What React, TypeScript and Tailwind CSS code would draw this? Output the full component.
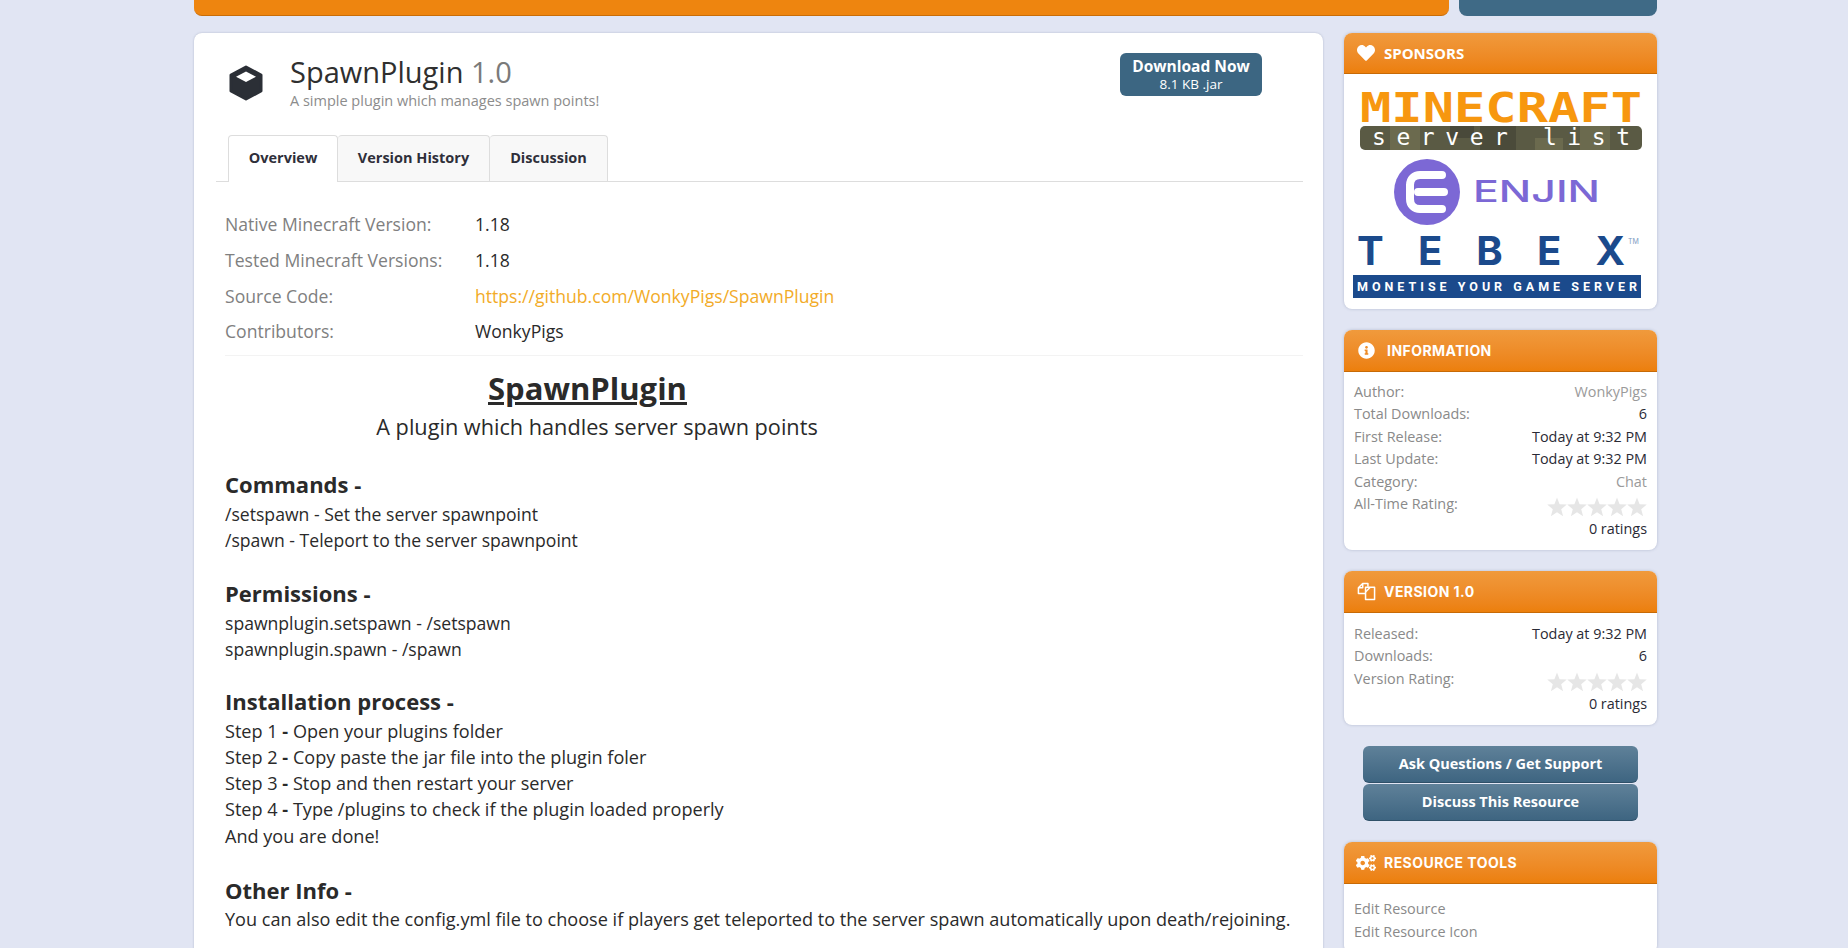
import React from 'react'
import { FaCogs, FaHeart, FaInfoCircle } from 'react-icons/fa'

type Row = { label: string; value: string; tone?: 'muted' | 'dark' }

const infoRows: Row[] = [
  { label: 'Author:', value: 'WonkyPigs', tone: 'muted' },
  { label: 'Total Downloads:', value: '6' },
  { label: 'First Release:', value: 'Today at 9:32 PM' },
  { label: 'Last Update:', value: 'Today at 9:32 PM' },
  { label: 'Category:', value: 'Chat', tone: 'muted' },
]

const versionRows: Row[] = [
  { label: 'Released:', value: 'Today at 9:32 PM' },
  { label: 'Downloads:', value: '6' },
]

const steps = [
  ['Step 1', 'Open your plugins folder'],
  ['Step 2', 'Copy paste the jar file into the plugin foler'],
  ['Step 3', 'Stop and then restart your server'],
  ['Step 4', 'Type /plugins to check if the plugin loaded properly'],
]

const FilesIcon = () => (
  <svg viewBox="0 0 20 20" className="w-[19px] h-[19px]" fill="none" stroke="white" strokeWidth="1.6" strokeLinejoin="round">
    <path d="M9 12H1.5V6L6 1.5h5.5V5" />
    <path d="M6 1.5V6H1.5" />
    <path d="M9 5.5h9.5v13H9z" />
    <path d="M14 5.5L9 10.5" />
  </svg>
)

const CubeIcon = () => (
  <svg viewBox="0 0 36 36" className="w-[36px] h-[36px]">
    <path d="M18 2 33 10v16L18 34 3 26V10z" fill="#2b2f36" strokeLinejoin="round" stroke="#2b2f36" strokeWidth="3" />
    <path d="M18 6.5 28 11.8 18 17 8 11.8z" fill="white" />
  </svg>
)

const Star = () => (
  <svg viewBox="0 0 20 20" className="w-[20px] h-[20px]">
    <path d="M10 0.5 12.6 7.2 19.8 7.6 14.2 12.2 16.1 19.2 10 15.3 3.9 19.2 5.8 12.2 0.2 7.6 7.4 7.2z" fill="#e6e6e6" />
  </svg>
)

const Card = ({ icon, title, gap = 'gap-[8px]', height = 'h-[42px]', titleClass, children }: { icon: React.ReactNode; title: string; gap?: string; height?: string; titleClass?: string; children: React.ReactNode }) => (
  <section className="rounded-lg bg-white shadow-[0_0_3px_rgba(120,130,160,0.45)] overflow-hidden">
    <div className={`${height} flex items-center pl-[12px] ${gap} bg-gradient-to-b from-[#f09a3c] to-[#ec7f0b] border-b border-[#c76a06] text-white`}>
      <span className="w-[20px] flex justify-center">{icon}</span>
      <h3 className={titleClass ?? "font-['Inter',sans-serif] text-[14px] font-bold tracking-[0.45px] uppercase"}>{title}</h3>
    </div>
    {children}
  </section>
)

const Rows = ({ rows }: { rows: Row[] }) => (
  <>
    {rows.map((r) => (
      <div key={r.label} className="flex justify-between h-[22.4px] leading-[22.4px]">
        <span className="text-[#8a8a8a]">{r.label}</span>
        <span className={r.tone === 'muted' ? 'text-[#9a9a9a]' : 'text-[#2a2a35]'}>{r.value}</span>
      </div>
    ))}
  </>
)

const Rating = ({ label }: { label: string }) => (
  <>
    <div className="flex justify-between h-[22px] leading-[22px]">
      <span className="text-[#8a8a8a]">{label}</span>
      <span className="flex pt-[4px]">
        {[0, 1, 2, 3, 4].map((i) => <Star key={i} />)}
      </span>
    </div>
    <div className="text-right text-[#2a2a35] mt-[3.5px] leading-[22px]">0 ratings</div>
  </>
)

const SideButton = ({ label }: { label: string }) => (
  <button className="h-[37px] pb-[1px] w-full rounded-md bg-gradient-to-b from-[#5f8199] to-[#3e6581] border-b border-[#2f5068] text-white text-[14.5px] font-bold">
    {label}
  </button>
)

const SponsorLogos = () => (
  <div className="flex flex-col items-center">
    <svg width="282" height="59" viewBox="0 0 282 59" className="mt-[18px] overflow-visible">
      <text x="0" y="30" textLength="282" lengthAdjust="spacingAndGlyphs" fill="#f7970f" fontSize="40" fontWeight="700" className="font-['DejaVu_Sans_Mono',monospace]">MINECRAFT</text>
      <rect x="0" y="34" width="282" height="24" rx="5" fill="#5a5a44" />
      <rect x="30" y="34" width="30" height="24" fill="#6b6a4e" />
      <rect x="90" y="34" width="24" height="12" fill="#49493a" />
      <rect x="120" y="34" width="36" height="24" fill="#4b4b3a" />
      <rect x="175" y="46" width="28" height="12" fill="#6b6a4e" />
      <rect x="220" y="34" width="30" height="24" fill="#6b6a4e" />
      <text x="12" y="53" textLength="258" lengthAdjust="spacing" fill="white" fontSize="23" className="font-['DejaVu_Sans_Mono',monospace]">server list</text>
    </svg>
    <svg width="282" height="68" viewBox="0 0 282 68" className="mt-[7px] mr-[4px]">
      <circle cx="69" cy="34" r="33" fill="#7c68d5" />
      <path d="M84 17H62c-6 0-10 4-10 10v14c0 6 4 10 10 10h22M60 34h26" fill="none" stroke="white" strokeWidth="8" strokeLinecap="round" />
      <text x="115" y="44" textLength="127" lengthAdjust="spacingAndGlyphs" fill="#7c68d5" fontSize="30" fontWeight="500" className="font-['Inter',sans-serif]">ENJIN</text>
    </svg>
    <svg width="288" height="68" viewBox="0 0 288 68" className="mt-[12px] mr-[7px] overflow-visible">
      <text x="4" y="27" textLength="268" lengthAdjust="spacing" fill="#1b4a8c" fontSize="40" fontWeight="700" className="font-['Inter',sans-serif]">TEBEX</text>
      <text x="275" y="6" fill="#7f9cc2" fontSize="7" className="font-['Inter',sans-serif]">TM</text>
      <rect x="0" y="37" width="288" height="23" fill="#1b4a8c" />
      <text x="4" y="53" textLength="280" lengthAdjust="spacing" fill="white" fontSize="12.5" fontWeight="700" className="font-['Roboto',sans-serif]">MONETISE YOUR GAME SERVER</text>
    </svg>
  </div>
)

export default function App() {
  return (
    <div className="h-[948px] overflow-hidden bg-[#e1e5f3] font-['Open_Sans',sans-serif] text-[#2a2a2a]">
      <div className="w-[1463px] ml-[194px]">
        <div className="flex gap-[10px] h-[16px]">
          <div className="w-[1255px] rounded-b-lg bg-[#ee850f] border-b border-[#c96d07]" />
          <div className="w-[198px] rounded-b-lg bg-[#3f6a86]" />
        </div>

        <div className="flex gap-[21px] mt-[17px]">
          <main className="w-[1129px] h-[1000px] rounded-lg bg-white shadow-[0_0_2px_rgba(120,130,160,0.5)] pl-[22px] pr-[20px]">
            <header className="flex h-[102px] pt-[19.5px]">
              <div className="ml-[12px] mt-[12.5px] w-[54px]"><CubeIcon /></div>
              <div className="ml-[8px] w-[811px]">
                <h1 className="text-[29px] leading-[38px] text-[#2f2f2f]">SpawnPlugin <span className="text-[#7a7a7a]">1.0</span></h1>
                <p className="mt-[1px] text-[14.5px] leading-[18px] text-[#8c8c8c]">A simple plugin which manages spawn points!</p>
              </div>
              <button className="mt-[0.5px] ml-[19px] w-[142px] h-[43px] rounded-md bg-[#3c6682] text-white flex flex-col items-center justify-center">
                <span className="text-[15.5px] leading-[19px] font-bold">Download Now</span>
                <span className="text-[13.5px] leading-[16px]">8.1 KB .jar</span>
              </button>
            </header>

            <nav className="flex h-[47px] pl-[12px] border-b border-[#dddddd] text-[14.5px] font-bold text-[#2f2f3a]">
              <div className="w-[110px] h-[47px] pb-[3px] flex items-center justify-center bg-white border border-b-0 border-[#dddddd] rounded-t">Overview</div>
              <div className="w-[152px] h-[46px] pb-[2px] flex items-center justify-center bg-[#f8f8f8] border border-l-0 border-b-0 border-[#dddddd] rounded-t">Version History</div>
              <div className="w-[118px] h-[46px] pb-[2px] flex items-center justify-center bg-[#f8f8f8] border border-l-0 border-b-0 border-[#dddddd] rounded-t">Discussion</div>
            </nav>

            <div className="ml-[9px]">
              <div className="mt-[25.3px] pb-[4.7px] border-b border-[#f3f3f3] text-[17.6px]">
                {[
                  ['Native Minecraft Version:', '1.18'],
                  ['Tested Minecraft Versions:', '1.18'],
                  ['Source Code:', 'https://github.com/WonkyPigs/SpawnPlugin'],
                  ['Contributors:', 'WonkyPigs'],
                ].map(([label, value], i) => (
                  <div key={label} className="flex h-[35.7px] leading-[35.7px]">
                    <span className="w-[250px] text-[#808080]">{label}</span>
                    <span className={i === 2 ? 'text-[#f2ab27]' : 'text-[#2a2a2a]'}>{value}</span>
                  </div>
                ))}
              </div>

              <div className="mt-[11.5px] text-[17.6px] leading-[25.5px]">
                <h2 className="w-[725px] text-center text-[31px] leading-[42px] font-bold underline">SpawnPlugin</h2>
                <p className="w-[744px] text-center text-[21.7px] leading-[32px] mt-[2px]">A plugin which handles server spawn points</p>

                <h3 className="mt-[25px] text-[22px] leading-[32px] font-bold">Commands -</h3>
                <div className="mt-[2px]">
                  <p>/setspawn - Set the server spawnpoint</p>
                  <p>/spawn - Teleport to the server spawnpoint</p>
                </div>

                <h3 className="mt-[26px] text-[22px] leading-[28px] font-bold">Permissions -</h3>
                <div className="mt-[4px]">
                  <p>spawnplugin.setspawn - /setspawn</p>
                  <p>spawnplugin.spawn - /spawn</p>
                </div>

                <h3 className="mt-[25px] text-[22px] leading-[28px] font-bold">Installation process -</h3>
                <div className="mt-[2.5px] text-[18.1px] leading-[26.2px]">
                  {steps.map(([step, text]) => (
                    <p key={step}>{step} <b>-</b> {text}</p>
                  ))}
                  <p>And you are done!</p>
                </div>

                <h3 className="mt-[27px] text-[22px] leading-[28px] font-bold">Other Info -</h3>
                <p className="mt-[2px] text-[18.1px] leading-[26px] whitespace-nowrap">You can also edit the config.yml file to choose if players get teleported to the server spawn automatically upon death/rejoining.</p>
              </div>
            </div>
          </main>

          <aside className="w-[313px] text-[14.4px]">
            <Card icon={<FaHeart className="text-[18px]" />} title="Sponsors" height="h-[41px]" titleClass="text-[15px] font-bold uppercase">
              <div className="h-[235px]"><SponsorLogos /></div>
            </Card>

            <div className="mt-[21px]">
              <Card icon={<FaInfoCircle className="text-[17px]" />} title="Information" gap="gap-[11px]">
                <div className="px-[10px] pt-[9px] h-[178px]">
                  <Rows rows={infoRows} />
                  <Rating label="All-Time Rating:" />
                </div>
              </Card>
            </div>

            <div className="mt-[21px]">
              <Card icon={<FilesIcon />} title="Version 1.0">
                <div className="px-[10px] pt-[10px] h-[112px]">
                  <Rows rows={versionRows} />
                  <Rating label="Version Rating:" />
                </div>
              </Card>
            </div>

            <div className="mt-[21px] mx-[19px] flex flex-col gap-[1px]">
              <SideButton label="Ask Questions / Get Support" />
              <SideButton label="Discuss This Resource" />
            </div>

            <div className="mt-[21px]">
              <Card icon={<FaCogs className="text-[20px]" />} title="Resource Tools">
                <div className="px-[10px] pt-[12.5px] pb-[10px] text-[#8a8a8a] leading-[23px]">
                  <div>Edit Resource</div>
                  <div>Edit Resource Icon</div>
                </div>
              </Card>
            </div>
          </aside>
        </div>
      </div>
    </div>
  )
}
